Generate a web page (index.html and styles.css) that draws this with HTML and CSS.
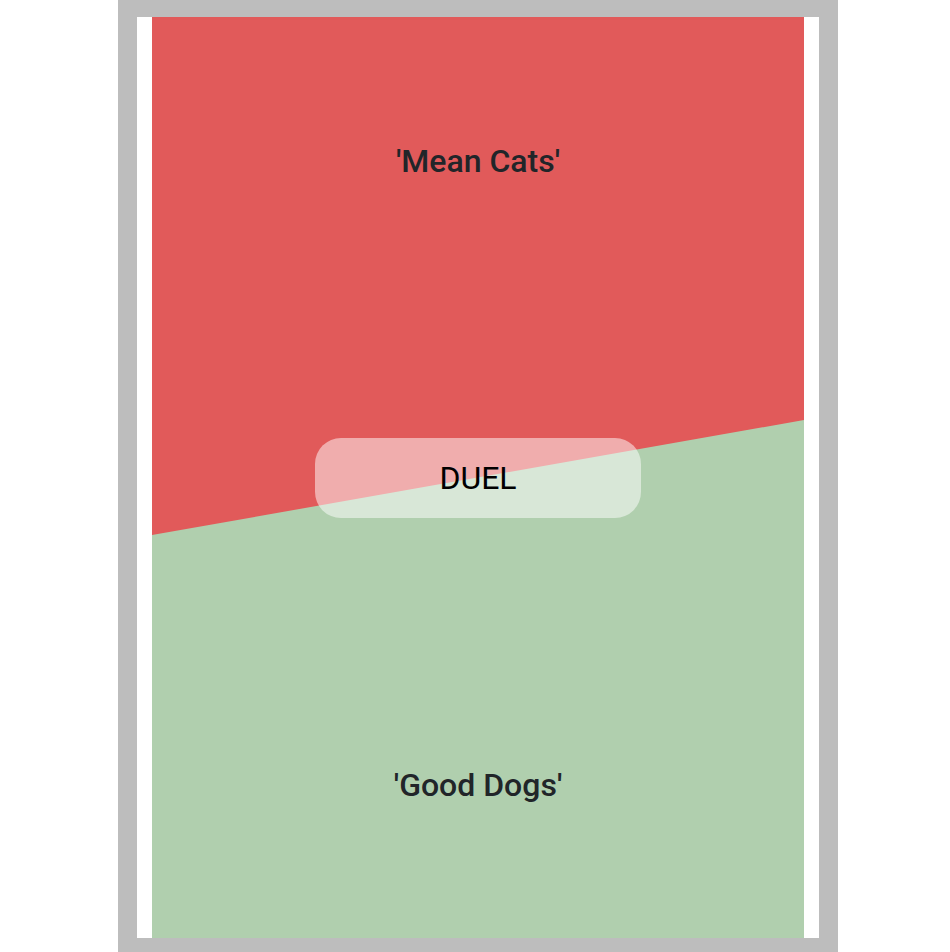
FILE: index.html
```html
<!DOCTYPE html>
<html>
<head>
<meta charset="utf-8">
<link rel="stylesheet" href="styles.css">
</head>
<body>
<div class="frame">
  <div class="card">
    <div class="arena">
      <div class="side side-red">
        <div class="label label-top">'Mean Cats'</div>
      </div>
      <div class="side side-green">
        <div class="label label-bottom">'Good Dogs'</div>
      </div>
      <button class="duel">DUEL</button>
    </div>
  </div>
</div>
</body>
</html>
```
FILE: styles.css
```css
html, body {
  margin: 0;
  padding: 0;
  background: #ffffff;
}
body {
  font-family: Roboto, "Liberation Sans", sans-serif;
}
.frame {
  margin-left: 118px;
  width: 720px;
  height: 952px;
  box-sizing: border-box;
  background: #bdbdbd;
  padding: 17px 19px 14px 19px;
}
.card {
  height: 100%;
  background: #ffffff;
  padding: 0 15px;
  box-sizing: border-box;
}
.arena {
  position: relative;
  height: 100%;
  display: grid;
  grid-template-rows: 1fr;
  grid-template-columns: 1fr;
}
.side {
  grid-row: 1;
  grid-column: 1;
  display: flex;
  flex-direction: column;
  align-items: center;
}
.side-red {
  background: #e15a5a;
  justify-content: flex-start;
}
.side-green {
  background: #b0cfae;
  justify-content: flex-end;
  clip-path: polygon(0 518px, 100% 403px, 100% 100%, 0 100%);
}
.label {
  font-size: 32px;
  font-weight: 500;
  line-height: 1.2;
  color: #212529;
}
.label-top {
  padding-top: 125px;
}
.label-bottom {
  padding-bottom: 134px;
}
.duel {
  position: absolute;
  left: 50%;
  top: 50%;
  transform: translate(-50%, -50%);
  width: 326px;
  height: 80px;
  border: none;
  border-radius: 26px;
  background: rgba(255, 255, 255, 0.5);
  font-family: Roboto, "Liberation Sans", sans-serif;
  font-size: 32px;
  font-weight: 400;
  color: #000000;
  padding: 0;
}
```
